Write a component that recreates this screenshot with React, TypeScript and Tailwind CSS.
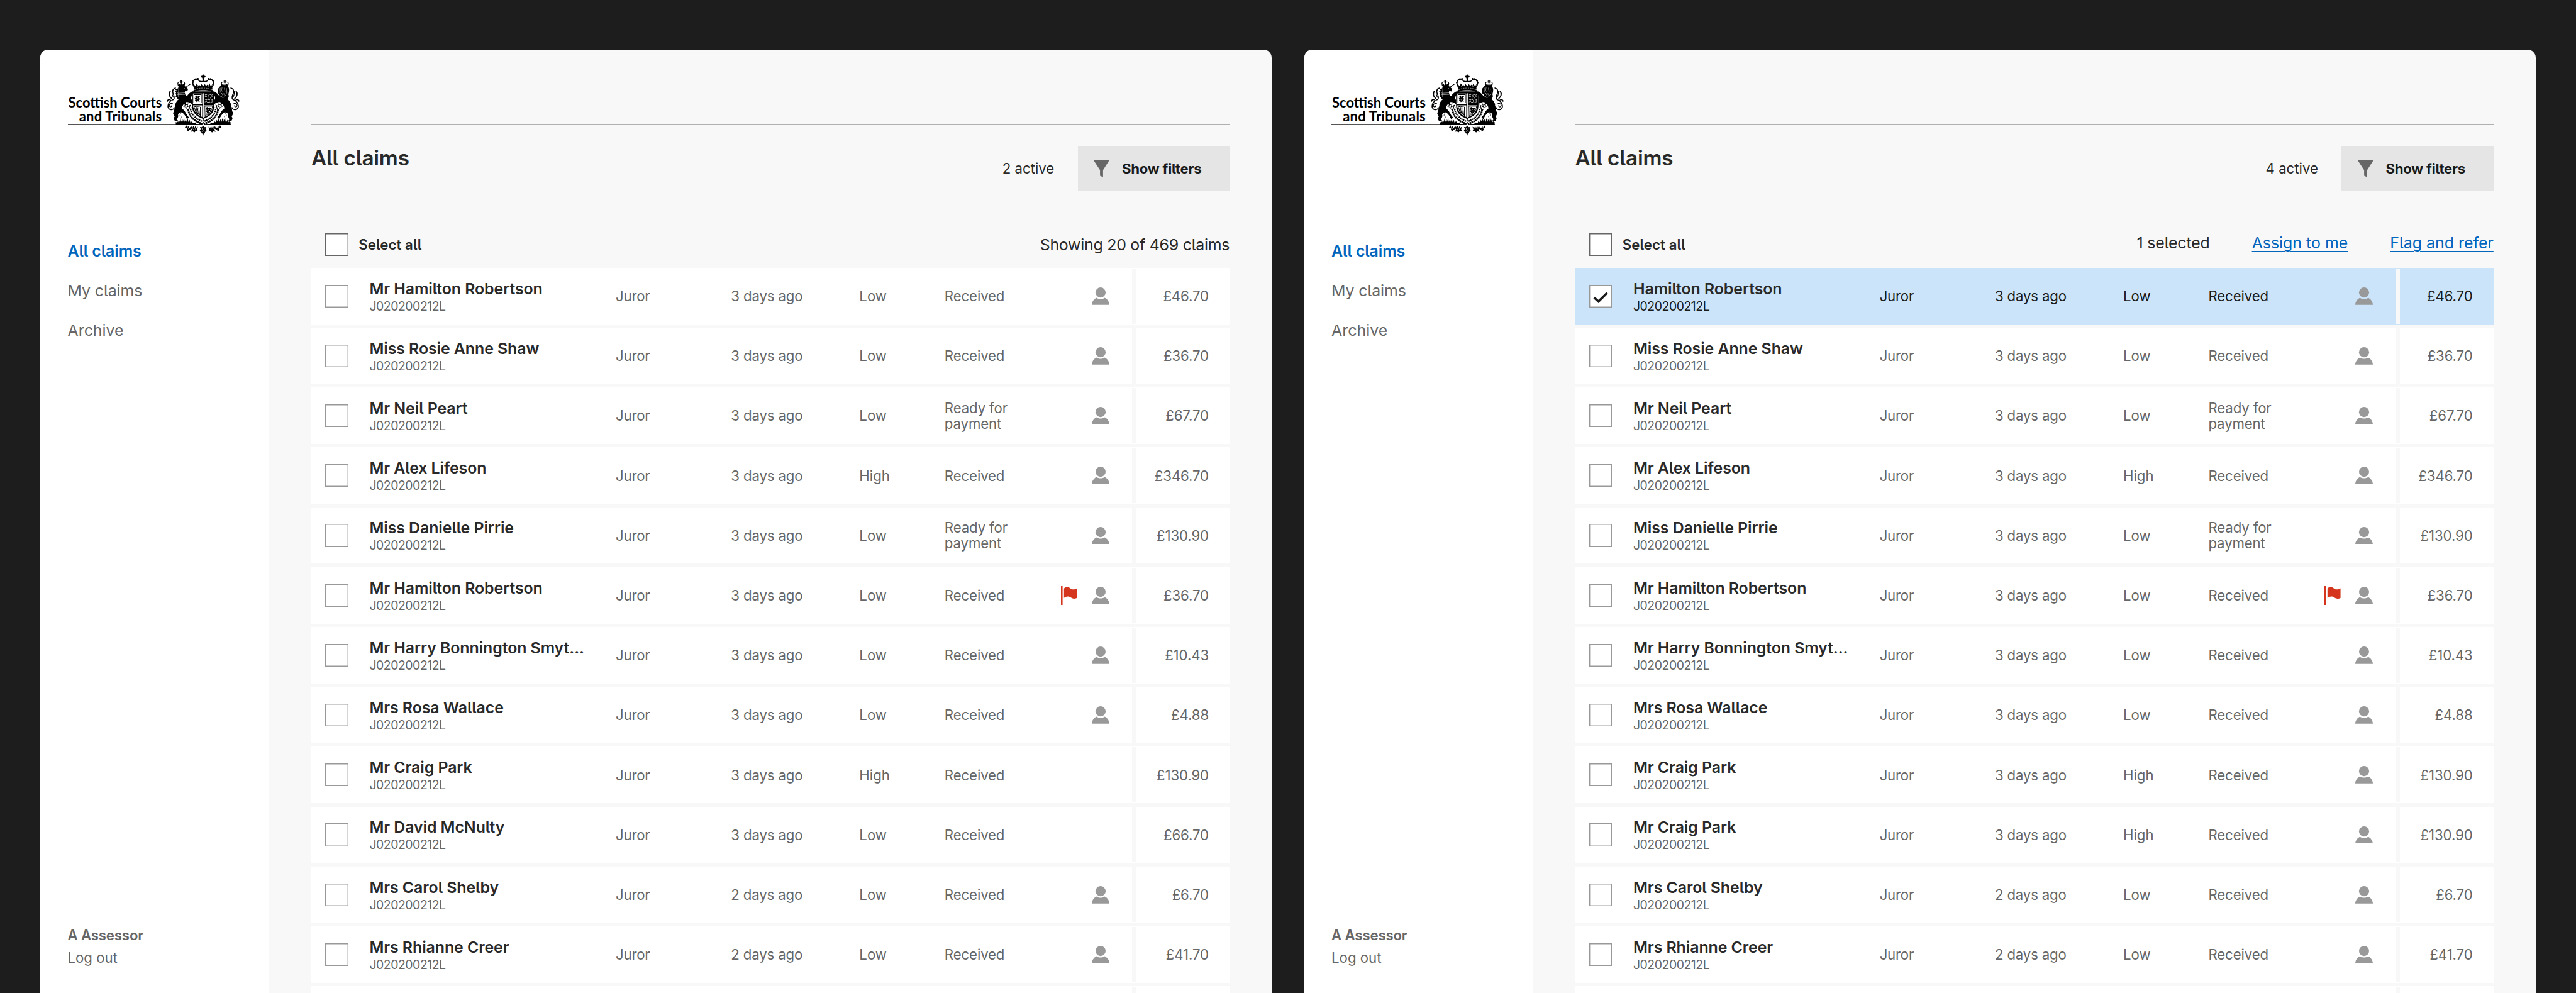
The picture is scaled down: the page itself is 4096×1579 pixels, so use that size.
type Claim = {
  name: string;
  age: string;
  priority: string;
  status: string;
  amount: string;
  assigned: boolean;
  flagged?: boolean;
  selected?: boolean;
};

const claim = (name: string, age: string, priority: string, status: string, amount: string, assigned = true, extra: Partial<Claim> = {}): Claim => ({
  name, age, priority, status, amount, assigned, ...extra,
});

const allClaims: Claim[] = [
  claim('Mr Hamilton Robertson', '3 days ago', 'Low', 'Received', '£46.70'),
  claim('Miss Rosie Anne Shaw', '3 days ago', 'Low', 'Received', '£36.70'),
  claim('Mr Neil Peart', '3 days ago', 'Low', 'Ready for payment', '£67.70'),
  claim('Mr Alex Lifeson', '3 days ago', 'High', 'Received', '£346.70'),
  claim('Miss Danielle Pirrie', '3 days ago', 'Low', 'Ready for payment', '£130.90'),
  claim('Mr Hamilton Robertson', '3 days ago', 'Low', 'Received', '£36.70', true, { flagged: true }),
  claim('Mr Harry Bonnington Smyt...', '3 days ago', 'Low', 'Received', '£10.43'),
  claim('Mrs Rosa Wallace', '3 days ago', 'Low', 'Received', '£4.88'),
  claim('Mr Craig Park', '3 days ago', 'High', 'Received', '£130.90', false),
  claim('Mr David McNulty', '3 days ago', 'Low', 'Received', '£66.70', false),
  claim('Mrs Carol Shelby', '2 days ago', 'Low', 'Received', '£6.70'),
  claim('Mrs Rhianne Creer', '2 days ago', 'Low', 'Received', '£41.70'),
];

const selectionClaims: Claim[] = [
  claim('Hamilton Robertson', '3 days ago', 'Low', 'Received', '£46.70', true, { selected: true }),
  ...allClaims.slice(1, 8),
  claim('Mr Craig Park', '3 days ago', 'High', 'Received', '£130.90'),
  claim('Mr Craig Park', '3 days ago', 'High', 'Received', '£130.90'),
  ...allClaims.slice(10),
];

function CrestHalf() {
  return (
    <g>
      {/* supporter body and legs */}
      <path d="M150 248C185 232 215 245 246 262L250 303C232 288 212 280 196 284C172 300 158 322 160 342C184 356 194 382 206 402L224 424L204 434C192 410 178 388 160 376C142 372 128 380 124 396C130 410 122 424 114 438L128 456H98C90 440 80 432 94 414L78 380C98 366 84 342 100 318C96 290 120 260 150 248Z" />
      <path d="M190 248C208 226 224 196 258 186V216C240 226 236 250 250 270L242 292Z" />
      {/* tail */}
      <g fill="none" stroke="#000" strokeWidth="9" strokeLinecap="round">
        <path d="M101 157C66 166 76 202 86 222C96 246 90 262 70 266" />
        <path d="M54 186C38 208 46 234 66 250" strokeWidth="11" />
        <path d="M78 176C62 200 72 222 82 240" strokeWidth="7" />
        <path d="M30 276C28 262 50 256 62 270C34 292 26 326 44 344C60 358 86 350 90 334" />
        <path d="M74 296C50 292 38 312 50 324C58 330 70 324 68 314" strokeWidth="7" />
      </g>
      {/* mantling and garter leaves */}
      <g fill="none" stroke="#000" strokeWidth="6">
        <path d="M170 300L190 292L186 312L212 300L204 326L234 312L222 340L246 332" />
        <path d="M166 318L196 330L206 352L226 350" strokeWidth="4" />
        <path d="M150 380L140 402L160 414L148 430" strokeWidth="4" />
      </g>
      <path d="M216 350C222 408 262 452 342 478" fill="none" stroke="#000" strokeWidth="16" strokeDasharray="15 3" />
      <path d="M236 345C244 392 278 432 342 456" fill="none" stroke="#000" strokeWidth="13" strokeDasharray="12 4" />
      {/* compartment */}
      <path d="M104 485V462L112 466L116 452L124 464L134 440L138 462L146 430L152 460L164 432L166 458L180 428L182 460L196 436L200 460L212 432L216 462L228 442L234 466L250 454L256 470L280 466L286 478L318 480L340 486Z" />
      {/* crown */}
      <path d="M349 96C330 102 312 98 304 84C290 72 268 78 258 98C248 112 264 130 268 152" fill="none" stroke="#000" strokeWidth="9" />
      <g>
        <circle cx="284" cy="78" r="9" /><circle cx="302" cy="76" r="8" /><circle cx="262" cy="92" r="8" /><circle cx="256" cy="110" r="7" /><circle cx="262" cy="128" r="7" />
        <path d="M266 166L270 130L282 142L292 116L304 138L314 126L322 142L334 122L349 142V164C318 156 290 160 268 172Z" />
        <path d="M262 178C286 158 320 152 349 152V196H258Z" />
      </g>
      <path d="M274 172C298 160 322 158 349 158" fill="none" stroke="#fff" strokeWidth="3" strokeDasharray="12 8" />
      <path d="M274 188C298 178 322 175 349 175V188H272Z" fill="#8a8a8a" />
      <path d="M292 136L302 148M322 122L330 108M280 118L286 106" stroke="#fff" strokeWidth="4" />
      {/* badge sprays */}
      <path d="M198 490L206 512L216 496L224 518L238 502L246 520L228 532L216 544L200 532L206 520L186 510Z" />
      <path d="M246 498L254 512L262 494L270 518L278 498L286 514L302 504L294 528L300 540L284 540L270 556L258 546L236 548L250 530L240 514Z" />
      <path d="M210 508L220 526M256 520L270 534M276 516L282 532" stroke="#fff" strokeWidth="3" />
    </g>
  );
}

function SmallCrown() {
  return (
    <g>
      <path d="M-4 -26H4V-18H10V-10H4V0H-4V-10H-10V-18H-4Z" />
      <path d="M0 0C-12 -12 -34 -8 -30 12L-26 30M0 0C12 -12 34 -8 30 12L26 30M0 0V28" fill="none" stroke="#000" strokeWidth="7" />
      <path d="M-28 20L-16 10L-8 22L0 8L8 22L16 10L28 20L24 38H-24Z" />
    </g>
  );
}

function Crest() {
  return (
    <svg viewBox="0 0 720 615" className="absolute left-[153.8px] top-0 h-[109.3px] w-[128px]" aria-hidden="true">
      <CrestHalf />
      <g transform="translate(698 0) scale(-1 1)"><CrestHalf /></g>
      <path d="M349 33L356 46L370 50V60L357 66L354 98H344L341 66L328 60V50L342 46Z" />

      {/* unicorn */}
      <g transform="translate(153 110)"><SmallCrown /></g>
      <path d="M118 252C102 226 102 190 118 166L136 140H184L194 146L214 166L206 188L188 182C182 200 186 216 206 236L214 256L150 262Z" />
      <path d="M192 152L236 121" stroke="#000" strokeWidth="6" />
      <path d="M102 170L124 178M98 190L122 192M100 210L124 208M104 234L128 226" stroke="#000" strokeWidth="8" />
      <path d="M130 158L128 236M112 218L196 214M122 204L186 200M112 180L124 184M112 198L122 200" fill="none" stroke="#fff" strokeWidth="3" />
      <circle cx="180" cy="160" r="3" fill="#fff" />

      {/* lion */}
      <g transform="translate(543 110)"><SmallCrown /></g>
      <path d="M500 142C520 132 560 132 574 148C586 168 580 196 574 214C584 236 574 252 556 262L486 258C494 240 500 224 494 214C476 204 476 180 482 164Z" />
      <path d="M502 156C496 172 506 184 500 200M518 152L514 176L524 190M540 154C534 170 548 180 544 196M560 160C554 176 566 190 560 206M506 214L516 204L524 222L534 206L544 228L556 214M500 238L514 232L524 246L538 236" fill="none" stroke="#fff" strokeWidth="3" />

      {/* shield */}
      <path d="M249 197H449V320C446 380 410 414 349 434C288 414 252 380 249 320Z" />
      <path d="M258 207H340V298H258ZM258 312H340V416C296 400 264 366 258 312ZM358 312H440C434 366 402 400 358 416Z" fill="#fff" />
      <path d="M349 206V426" stroke="#fff" strokeWidth="11" />
      <path d="M349 206V426" stroke="#999" strokeWidth="3" />
      <path d="M266 216H332V290H266Z" fill="none" stroke="#000" strokeWidth="6" />
      <path d="M276 228L290 224L296 236L308 226L320 232L314 246L324 258L312 264L318 282L302 276L292 284L284 272L274 276L280 258L272 246L286 246Z" />
      <path d="M298 244L304 256M290 256L298 268" stroke="#fff" strokeWidth="3" />
      <g fill="none" stroke="#fff" strokeWidth="4">
        <path d="M364 214L376 220L386 212L398 222L410 214L422 222L436 214" />
        <path d="M364 236L378 232L388 242L402 234L412 244L424 236L438 242" />
        <path d="M364 258L376 264L390 256L402 266L414 256L426 264L438 258" />
        <path d="M364 282L380 278L390 288L404 280L416 290L428 280L438 286" />
        <path d="M370 222V232M392 244V254M418 246V256M376 266V276M404 268V278M430 266V278M430 224V234" />
      </g>
      <path d="M266 320L290 326C300 318 316 322 328 318M272 330C274 356 290 384 324 402V326M286 330L296 376M298 330L306 386M310 330L316 392" fill="none" stroke="#000" strokeWidth="6" />
      <path d="M364 320H432C428 360 404 388 366 406Z" fill="none" stroke="#000" strokeWidth="5" />
      <path d="M374 332L388 326L394 338L408 330L420 336L412 350L418 360L404 364L406 378L392 376L380 392L382 372L370 368L382 354L370 344Z" />
      <path d="M390 346L400 354M386 360L396 366" stroke="#fff" strokeWidth="3" />

      {/* pendant */}
      <path d="M343 440H355V500H343Z" />
      <path d="M349 446L356 456L349 466L342 456ZM344 476H354V496H344Z" fill="#fff" />
      <path d="M344 496H354L360 508L378 506L370 522L382 544L366 550L364 562L354 566L349 584L344 566L334 562L332 550L316 544L328 522L320 506L338 508Z" />
      <path d="M340 516V528M358 516V528M336 546H344M354 546H362M349 530V540" stroke="#fff" strokeWidth="4" />
    </svg>
  );
}

function Logo() {
  return (
    <div className="relative h-[109.3px] w-[282px]">
      <div className="w-[149.9px] pt-[40px] text-right font-['Lato',sans-serif] text-[22px] leading-[21.7px] font-bold whitespace-nowrap text-black">
        <div className="-ml-2">Scottish Courts</div>
        <div className="tracking-[0.2px]">and Tribunals</div>
      </div>
      <div className="absolute top-[84.7px] left-0 h-[2px] w-[259.5px] bg-[#555]" />
      <Crest />
    </div>
  );
}

function Checkbox({ strong, checked }: { strong?: boolean; checked?: boolean }) {
  return (
    <span className={`block size-[36.2px] shrink-0 bg-white ${strong ? 'shadow-[inset_0_0_0_1.4px_#666]' : 'shadow-[inset_0_0_0_1.4px_#999]'}`}>
      {checked && (
        <svg viewBox="0 0 68 68" className="size-full" aria-hidden="true">
          <path d="M14.5 38L27.5 49.5L53.5 24" fill="none" stroke="#1a1a1a" strokeWidth="7" />
        </svg>
      )}
    </span>
  );
}

function PersonIcon() {
  return (
    <svg viewBox="0 0 52.5 52" className="h-[27.8px] w-[28px]" fill="#999" aria-hidden="true">
      <circle cx="26.2" cy="15.2" r="15.1" />
      <path d="M14 30.8C20 36 32.500 36 38.500 30.8C47 35 52 43 52.500 52H0C.5 43 5.500 35 14 30.8Z" />
    </svg>
  );
}

function FlagIcon() {
  return (
    <svg viewBox="0 0 48 56.7" className="mr-[23.6px] h-[30.2px] w-[25.6px]" fill="#d5351c" aria-hidden="true">
      <path d="M0 0H4.8V56.7H0Z" />
      <path d="M9 7C14 1.500 21 1.500 26 5C31 10.500 39 12 48 6.500V35C42 39 35 38.500 30 34.500C24 29.500 16 30 9 35Z" />
    </svg>
  );
}

function FunnelIcon() {
  return (
    <svg viewBox="0 0 46.4 50" className="h-[26.7px] w-[24.7px]" fill="#666" aria-hidden="true">
      <path d="M0 0H46.4L28 29V50L19 46V29Z" />
    </svg>
  );
}

function Row({ item }: { item?: Claim }) {
  const selected = item?.selected;
  return (
    <li className={`relative grid h-[89.76px] shrink-0 grid-cols-[70px_391.7px_183.3px_204px_135.5px_110px_1fr_120.5px] items-center pl-[22.5px] text-[22.2px] leading-[25.4px] ${selected ? 'bg-[#cbe4f9] text-[#1a1a1a]' : 'bg-white text-[#666]'}`}>
      {item && (
        <>
          <Checkbox checked={selected} />
          <div className="pt-[1px] whitespace-nowrap">
            <div className="text-[24.9px] leading-[32px] font-semibold tracking-[-0.08px] text-[#292929]">{item.name}</div>
            <div className="text-[19.4px] leading-[25px] tracking-[-0.45px]">J020200212L</div>
          </div>
          <span className="tracking-[-0.2px]">Juror</span>
          <span className="tracking-[-0.15px]">{item.age}</span>
          <span>{item.priority}</span>
          <span className="tracking-[-0.12px]">{item.status}</span>
          <div className="flex items-center justify-end pr-[71px]">
            {item.flagged && <FlagIcon />}
            {item.assigned && <PersonIcon />}
          </div>
          <span className="justify-self-end pr-[33.2px] text-right tracking-[-0.1px]">{item.amount}</span>
        </>
      )}
      <div className="absolute inset-y-[1px] left-[1305.6px] w-[6px] bg-[#f8f8f8]" />
    </li>
  );
}

function Sidebar() {
  return (
    <aside className="flex w-[363.7px] shrink-0 flex-col bg-white pt-[33.1px] pb-[38.4px] pl-[43.5px] text-[24.9px] leading-[62.9px] text-[#666]">
      <Logo />
      <nav className="mt-[147.2px] flex flex-col">
        <a className="font-semibold tracking-[-0.1px] text-[#0065bd]">All claims</a>
        <a className="tracking-[-0.1px]">My claims</a>
        <a>Archive</a>
      </nav>
      <div className="mt-auto text-[22.2px] leading-[36px]">
        <div className="font-semibold tracking-[-0.15px]">A Assessor</div>
        <div>Log out</div>
      </div>
    </aside>
  );
}

function Panel({ active, claims, selection }: { active: string; claims: Claim[]; selection?: boolean }) {
  return (
    <section className="flex h-full w-[1958.4px] shrink-0 overflow-hidden rounded-t-[12.8px] bg-[#f8f8f8]">
      <Sidebar />
      <main className="flex flex-1 flex-col px-[67.2px] pt-[118.5px] text-[#292929]">
        <div className="h-[1.4px] shrink-0 bg-[#b0b0b0]" />
        <header className="mt-[32.8px] flex h-[72.8px] shrink-0 items-center">
          <h1 className="mr-auto mb-[33px] text-[33.3px] leading-[40px] font-semibold tracking-[-0.2px]">All claims</h1>
          <span className="text-[22.2px] leading-[28px]">{active}</span>
          <button className="ml-[37.6px] flex h-full w-[241.3px] items-center bg-[#e5e5e5] pl-[25.3px] text-[22.2px] leading-[28px] font-bold tracking-[-0.25px] text-[#1a1a1a]">
            <FunnelIcon />
            <span className="ml-[20px]">Show filters</span>
          </button>
        </header>
        <div className="mt-[66.8px] flex h-[36.2px] shrink-0 items-center pl-[22.5px]">
          <Checkbox strong />
          <span className="mr-auto ml-[16.6px] text-[22.2px] leading-[28px] font-semibold tracking-[0.1px]">Select all</span>
          {selection ? (
            <div className="mb-[6.5px] flex gap-[67px] text-[24.9px] leading-[32px]">
              <span className="tracking-[-0.15px]">1 selected</span>
              <a className="text-[#0065bd] underline decoration-[1.4px] underline-offset-[4px]">Assign to me</a>
              <a className="text-[#0065bd] underline decoration-[1.4px] underline-offset-[4px]">Flag and refer</a>
            </div>
          ) : (
            <span className="text-[24.9px] leading-[32px] tracking-[-0.25px]">Showing 20 of 469 claims</span>
          )}
        </div>
        <ul className="mt-[18.5px] flex flex-col gap-[5.44px]">
          {claims.map((c, i) => <Row key={i} item={c} />)}
          <Row />
        </ul>
      </main>
    </section>
  );
}

export default function App() {
  return (
    <div className="flex h-[1579px] w-[4096px] gap-[51.2px] overflow-hidden bg-[#1d1d1d] pt-[78.9px] pl-[64px] font-['Inter',sans-serif] [font-feature-settings:'cv05']">
      <Panel active="2 active" claims={allClaims} />
      <Panel active="4 active" claims={selectionClaims} selection />
    </div>
  );
}
